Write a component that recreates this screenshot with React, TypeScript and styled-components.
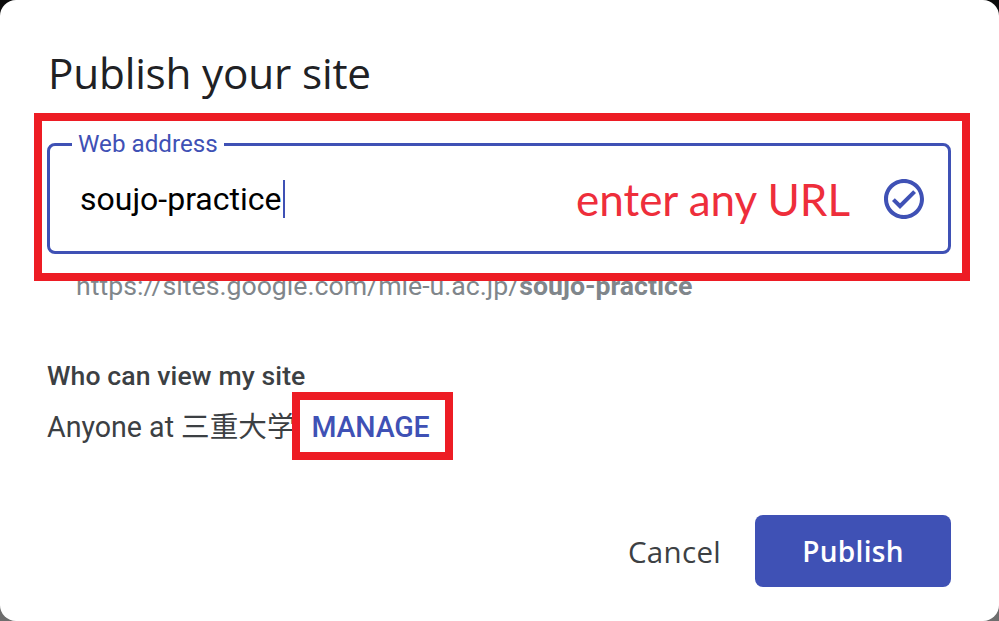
import React from 'react';
import styled, { createGlobalStyle } from 'styled-components';

const GlobalStyle = createGlobalStyle`
  html, body {
    margin: 0;
    padding: 0;
    width: 999px;
    height: 621px;
    overflow: hidden;
    background: linear-gradient(180deg, #0b0b0b 0%, #3a3a3a 50%, #6e6e6e 100%);
  }
  * {
    box-sizing: border-box;
  }
`;

const Dialog = styled.div`
  width: 999px;
  height: 621px;
  background: #ffffff;
  border-radius: 16px;
  padding: 47px 48px 34px 47px;
  display: flex;
  flex-direction: column;
  font-family: Roboto, 'Noto Sans CJK JP', sans-serif;

  & > * {
    flex-shrink: 0;
  }
`;

const Title = styled.h1`
  margin: 0 0 0 1px;
  font-family: 'Open Sans', Roboto, sans-serif;
  font-weight: 400;
  font-size: 42.3px;
  line-height: 52px;
  color: #202124;
  letter-spacing: -0.2px;
`;

const FieldBox = styled.div`
  position: relative;
  margin-top: 44px;
`;

const Outline = styled.div`
  position: relative;
  height: 111px;
  border: 3px solid #3f51b5;
  border-radius: 8px;
  display: flex;
  align-items: center;
  padding: 0 20px 0 30px;
`;

const FloatLabel = styled.span`
  position: absolute;
  top: -16px;
  left: 22px;
  padding: 0 6px;
  background: #ffffff;
  color: #3f51b5;
  font-size: 24.2px;
  line-height: 28px;
`;

const InputText = styled.span`
  font-size: 32px;
  color: #000000;
`;

const Caret = styled.span`
  display: inline-block;
  width: 2px;
  height: 38px;
  margin-left: 2px;
  background: #3f51b5;
`;

const Hint = styled.span`
  margin-left: auto;
  margin-right: 30px;
  font-family: Lato, 'Open Sans', sans-serif;
  font-size: 44px;
  color: #ee2e3b;
`;

const CheckIcon = styled.svg`
  width: 48px;
  height: 48px;
  fill: #3f51b5;
`;

const HelperText = styled.div`
  margin: 15px 0 0 29px;
  font-size: 26.7px;
  line-height: 34px;
  color: #80868b;

  b {
    font-weight: 700;
  }
`;

const Annotation = styled.div<{ $top: number; $left: number; $right: number; $bottom: number }>`
  position: absolute;
  top: ${({ $top }) => $top}px;
  left: ${({ $left }) => $left}px;
  right: ${({ $right }) => $right}px;
  bottom: ${({ $bottom }) => $bottom}px;
  border: 8px solid #ed1c24;
  pointer-events: none;
`;

const Section = styled.div`
  margin-top: 57px;
  display: flex;
  flex-direction: column;
  gap: 15px;
`;

const SectionTitle = styled.div`
  font-size: 26.6px;
  font-weight: 500;
  line-height: 32px;
  color: #3c4043;
  letter-spacing: 0.1px;
`;

const AccessRow = styled.div`
  display: flex;
  align-items: baseline;
  font-size: 28.6px;
  line-height: 40px;
  color: #3c4043;
`;

const ManageWrap = styled.span`
  position: relative;
  margin-left: 16px;
`;

const ManageLink = styled.span`
  font-weight: 500;
  color: #3f51b5;
  letter-spacing: -0.2px;
`;

const Actions = styled.div`
  margin-top: auto;
  display: flex;
  justify-content: flex-end;
  align-items: center;
  gap: 34px;
`;

const TextButton = styled.button`
  border: none;
  background: transparent;
  font-family: 'Open Sans', Roboto, sans-serif;
  font-size: 29.5px;
  font-weight: 500;
  color: #3c4043;
  padding: 0;
  letter-spacing: 0.3px;
`;

const PrimaryButton = styled.button`
  width: 196px;
  height: 72px;
  border: none;
  border-radius: 8px;
  background: #3f51b5;
  color: #ffffff;
  font-family: 'Open Sans', Roboto, sans-serif;
  font-size: 28px;
  font-weight: 600;
  letter-spacing: 0.3px;
`;

export default function App() {
  return (
    <>
      <GlobalStyle />
      <Dialog>
        <Title>Publish your site</Title>
        <FieldBox>
          <Outline>
            <FloatLabel>Web address</FloatLabel>
            <InputText>soujo-practice</InputText>
            <Caret />
            <Hint>enter any URL</Hint>
            <CheckIcon viewBox="0 0 24 24">
              <path d="M12 2C6.48 2 2 6.48 2 12s4.48 10 10 10 10-4.48 10-10S17.52 2 12 2zm0 18c-4.41 0-8-3.59-8-8s3.59-8 8-8 8 3.59 8 8-3.59 8-8 8zm4.59-12.42L10 14.17l-2.59-2.58L6 13l4 4 8-8z" />
            </CheckIcon>
          </Outline>
          <HelperText>
            https://sites.google.com/mie-u.ac.jp/<b>soujo-practice</b>
          </HelperText>
          <Annotation $top={-30} $left={-13} $right={-19} $bottom={22} />
        </FieldBox>
        <Section>
          <SectionTitle>Who can view my site</SectionTitle>
          <AccessRow>
            Anyone at 三重大学
            <ManageWrap>
              <ManageLink>MANAGE</ManageLink>
              <Annotation $top={-15} $left={-20} $right={-24} $bottom={-13} />
            </ManageWrap>
          </AccessRow>
        </Section>
        <Actions>
          <TextButton>Cancel</TextButton>
          <PrimaryButton>Publish</PrimaryButton>
        </Actions>
      </Dialog>
    </>
  );
}
